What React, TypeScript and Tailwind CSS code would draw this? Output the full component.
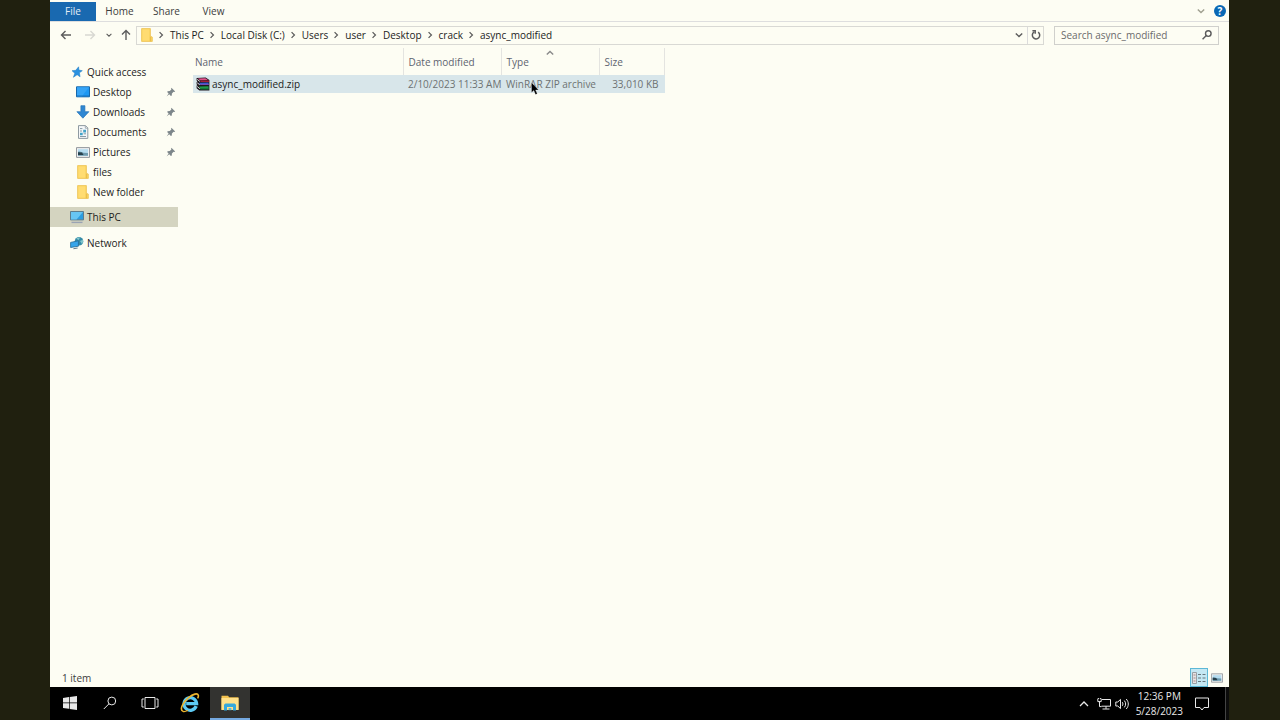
import type { ReactNode } from "react";

type IconProps = { className?: string };

function ChevronIcon({ className = "" }: IconProps) {
  return (
    <svg viewBox="0 0 10 10" fill="none" stroke="currentColor" strokeWidth="1.4" className={`h-[10px] w-[10px] shrink-0 ${className}`}>
      <path d="M1.8 3.4 5 6.6l3.2-3.2" />
    </svg>
  );
}

function FolderIcon() {
  return (
    <svg viewBox="0 0 12 14" className="h-[14px] w-3 shrink-0">
      <path d="M.6.6h8.8v7.6l1.9.9v4.3H.6z" fill="#fbd45c" stroke="#ecc253" strokeWidth=".8" />
      <path d="M1.4 1.4h7v11.2h-7z" fill="#ffdc72" />
      <path d="M9.4 8.6v4.6" stroke="#e3b548" strokeWidth=".8" />
    </svg>
  );
}

function PinIcon() {
  return (
    <svg viewBox="0 0 10 10" className="h-[10px] w-[10px] shrink-0">
      <path d="M5.4.8 9.2 4.6l-1 .4-.6-.2-1.7 1.8-.1 2L4.9 9 3.2 7.2.6 9.4l2-2.8L1.1 5l.6-.8 2-.1 1.7-1.7-.3-.7z" fill="#7d868a" />
    </svg>
  );
}

function StarIcon() {
  return (
    <svg viewBox="0 0 12 12" className="h-3 w-3 shrink-0">
      <path d="m7.6.8.3 3.3 3.4.6-2.9 2.1.7 4-3-2.1-3.7 2.6 1.4-4L1 4.7l3.8-.4z" fill="#2a91e0" stroke="#1b78c2" strokeWidth=".5" />
    </svg>
  );
}

function DesktopIcon() {
  return (
    <svg viewBox="0 0 14 12" className="h-3 w-[14px] shrink-0">
      <path d="M.5.8h13v10H.5z" fill="#1e98f3" stroke="#1767aa" />
      <path d="M1 1.3h12L6 10.3H1z" fill="#36a4f6" />
      <path d="M1 9.5h12v.8H1z" fill="#1571bd" />
    </svg>
  );
}

function DownloadIcon() {
  return (
    <svg viewBox="0 0 14 14" className="h-[14px] w-[14px] shrink-0">
      <path d="M4.9.7h4v6h4L6.9 13.2.9 6.7h4z" fill="#2f87d2" stroke="#2573b7" strokeWidth=".7" />
    </svg>
  );
}

function DocumentIcon() {
  return (
    <svg viewBox="0 0 12 14" className="h-[14px] w-3 shrink-0">
      <path d="M1.5.6h7l2.3 2.3v10.5H1.5z" fill="#f5f7f8" stroke="#8f9aa1" />
      <path d="M8.3.8v2.4h2.4" fill="none" stroke="#8f9aa1" strokeWidth=".8" />
      <path d="M3 3.6h2.4M3 6h2M3 11.5h6M6.6 8.8H9" stroke="#6a8390" strokeWidth=".8" />
      <path d="M6.2 4.8H9v2.6H6.2zM3 7.8h2.7v2.5H3z" fill="#43a4c9" />
    </svg>
  );
}

function PictureIcon({ className = "h-[11px] w-[14px]" }: IconProps) {
  return (
    <svg viewBox="0 0 14 11" className={`shrink-0 ${className}`}>
      <path d="M.5.6h13v9.8H.5z" fill="#eef0f1" stroke="#93989c" />
      <path d="M2 2.2h10v6.6H2z" fill="#b5dcef" />
      <path d="M2 4.8c2.4-.8 3.6.6 5.4.9l4.6.3v2.8H2z" fill="#6d9aae" />
      <path d="M2 5.2 6 5.6 7.6 8H2z" fill="#27404b" />
    </svg>
  );
}

function ComputerIcon() {
  return (
    <svg viewBox="0 0 14 14" className="h-[14px] w-[14px] shrink-0">
      <path d="M.5 1.5h13v8.4H.5z" fill="#2d9de0" stroke="#5e7c8d" />
      <path d="M1 2h12L6.5 9.4H1z" fill="#67c5f3" />
      <path d="M1.5 12.4h11" stroke="#9aa3b3" strokeWidth="1.4" />
    </svg>
  );
}

function NetworkIcon() {
  return (
    <svg viewBox="0 0 14 14" className="h-[14px] w-[14px] shrink-0">
      <circle cx="9" cy="5.3" r="4.3" fill="#368ca7" />
      <path d="M6.3 2.3c1.5-1 3-1 3.8-.7L8.4 4.3zM10 5l2.8-1.2c.6 1.7.1 3.2-.8 4.1z" fill="#83c7cd" />
      <path d="m.6 6.4 7.8-1.6v5.4L.6 11.5z" fill="#36a5ea" stroke="#236a98" strokeWidth=".8" />
      <path d="M3.4 12.7 7.6 12" stroke="#667d8b" strokeWidth="1.1" />
    </svg>
  );
}

function ArchiveIcon() {
  return (
    <svg viewBox="0 0 14 14" className="h-[14px] w-[14px] shrink-0">
      <path d="M.6 1 9.6.4l3.8 2.6v10.4H3.4L.6 11.2V8.6l.8-.4-.8-.9V4.9l.8-.4-.8-.9z" fill="#1d171d" />
      <path d="m2 1.6 7.4-.4 2.6 1.7-8 .3z" fill="#e0508a" />
      <path d="M4.4 3.6H13v1.2H4.4z" fill="#c4223f" />
      <path d="m3 5.8 9.6-.2V8H4.4z" fill="#3f55cf" />
      <path d="M4.4 7h8.4v.9H4.4z" fill="#7a4fb0" />
      <path d="m3 9.4 9.6-.1v2.9H4.4z" fill="#1f9a48" />
      <path d="M4.4 11.4H13v.9H4.4z" fill="#116b30" />
      <path d="m1.2 2.4 2.6 2M1.2 5.8l2.6 2M1.2 9.5l2.6 2.2" stroke="#f4f4f4" strokeWidth=".9" />
    </svg>
  );
}

function ArrowIcon({ className = "" }: IconProps) {
  return (
    <svg viewBox="0 0 12 12" fill="none" stroke="currentColor" strokeWidth="1.4" className={`h-3 w-3 shrink-0 ${className}`}>
      <path d="M11 6H1.5M5.5 2l-4 4 4 4" />
    </svg>
  );
}

function MagnifierIcon({ className = "" }: IconProps) {
  return (
    <svg viewBox="0 0 14 14" fill="none" stroke="currentColor" className={`shrink-0 ${className}`}>
      <circle cx="8.8" cy="5" r="3.9" />
      <path d="M6 7.8.8 13" />
    </svg>
  );
}

function ExplorerIcon() {
  return (
    <svg viewBox="0 0 18 16" className="h-4 w-[18px]">
      <path d="M.5.7H7l1.2 1.6h9.3v12.6H.5z" fill="#f2c14e" />
      <path d="M.5 3h17v11.9H.5z" fill="#ffe08a" />
      <path d="M3 15.5V9.8L4.4 8.4h9.2L15 9.8v5.7h-3V12H6v3.5z" fill="#35a8dc" />
      <path d="M7.6 13h2.8v2.2H7.6z" fill="#58b9dc" />
    </svg>
  );
}

function InternetExplorerIcon() {
  return (
    <svg viewBox="0 0 20 20" fill="none" className="h-5 w-5">
      <path d="M16.2 13.2A6.3 6.3 0 1 1 16.6 10.6H6.2" stroke="#5dcaf3" strokeWidth="3.3" />
      <path d="M3 18.4C-.8 16.5 3 9.2 8.6 4.6 13 1 17.6-.2 18.3 2.2c.3 1-.1 2.1-.7 3.1" stroke="#efb62e" strokeWidth="1.6" />
      <path d="M3 18.4c1.3.5 3.2-.2 4.8-1.2" stroke="#efb62e" strokeWidth="1.3" />
    </svg>
  );
}

const tabs = ["Home", "Share", "View"];
const crumbs = ["This PC", "Local Disk (C:)", "Users", "user", "Desktop", "crack", "async_modified"];

const quickAccess = [
  { name: "Desktop", icon: <DesktopIcon />, pinned: true },
  { name: "Downloads", icon: <DownloadIcon />, pinned: true },
  { name: "Documents", icon: <DocumentIcon />, pinned: true },
  { name: "Pictures", icon: <PictureIcon />, pinned: true },
  { name: "files", icon: <FolderIcon />, pinned: false },
  { name: "New folder", icon: <FolderIcon />, pinned: false },
];

function Ribbon() {
  return (
    <div className="flex h-[22px] items-center border-b border-[#dedede] pt-px">
      <button type="button" className="h-[19px] w-[46px] bg-[#1969b0] text-[#e4eef6]">
        File
      </button>
      {tabs.map((tab) => (
        <button key={tab} type="button" className="w-[47px] text-[#3c3c3c]">
          {tab}
        </button>
      ))}
      <button type="button" aria-label="Minimize the ribbon" className="ml-auto text-[#a0a090]">
        <ChevronIcon />
      </button>
      <button
        type="button"
        aria-label="Help"
        className="mr-[3px] ml-2 flex h-3 w-3 items-center justify-center rounded-full bg-[#0968b5] font-bold text-white"
      >
        ?
      </button>
    </div>
  );
}

function AddressBar() {
  return (
    <div className="flex h-[26px] items-center px-[10px] text-[#5c5c5c]">
      <button type="button" aria-label="Back">
        <ArrowIcon />
      </button>
      <button type="button" aria-label="Forward" className="ml-3 text-[#d8d8d2]">
        <ArrowIcon className="rotate-180" />
      </button>
      <button type="button" aria-label="Recent locations" className="ml-2">
        <ChevronIcon className="scale-75" />
      </button>
      <button type="button" aria-label="Up" className="ml-1.5">
        <ArrowIcon className="rotate-90" />
      </button>
      <div className="ml-1 flex h-[19px] flex-1 items-center border border-[#d9d9d4] pl-1">
        <FolderIcon />
        <ol className="flex flex-1 items-center text-[#1c1c1c]">
          {crumbs.map((crumb) => (
            <li key={crumb} className="flex items-center">
              <ChevronIcon className="mr-1 ml-[3px] -rotate-90 scale-90 text-[#5c5c5c]" />
              <a href="#">{crumb}</a>
            </li>
          ))}
        </ol>
        <button type="button" aria-label="Previous locations" className="mr-[3px]">
          <ChevronIcon />
        </button>
        <button type="button" aria-label="Refresh" className="flex h-[17px] w-4 items-center justify-center border-l border-[#dcdcdc]">
          <svg viewBox="0 0 10 10" fill="none" stroke="currentColor" strokeWidth="1.5" className="h-[10px] w-[10px]">
            <path d="M7.2 2.2A3.7 3.7 0 1 1 3 2.1M1.4.8h2.8v3" />
          </svg>
        </button>
      </div>
      <div className="ml-[10px] flex h-[19px] w-[165px] items-center border border-[#d0d0cc] px-1.5">
        <input
          type="text"
          aria-label="Search async_modified"
          placeholder="Search async_modified"
          className="min-w-0 flex-1 bg-transparent outline-none placeholder:text-[#6b6b6b]"
        />
        <MagnifierIcon className="h-[10px] w-[10px] stroke-2" />
      </div>
    </div>
  );
}

type NavItemProps = {
  icon: ReactNode;
  name: string;
  nested?: boolean;
  pinned?: boolean;
  selected?: boolean;
};

function NavItem({ icon, name, nested = false, pinned = false, selected = false }: NavItemProps) {
  return (
    <a
      href="#"
      className={`flex h-5 items-center pr-[2px] ${nested ? "pl-[26px]" : "pl-5"} ${selected ? "bg-[#d4d4c0]" : ""}`}
    >
      <span className="mr-[3px] flex w-[14px] justify-center">{icon}</span>
      <span className="flex-1">{name}</span>
      {pinned ? <PinIcon /> : null}
    </a>
  );
}

function Sidebar() {
  return (
    <nav className="w-32 shrink-0 pt-[14px]">
      <NavItem icon={<StarIcon />} name="Quick access" />
      {quickAccess.map((item) => (
        <NavItem key={item.name} icon={item.icon} name={item.name} pinned={item.pinned} nested />
      ))}
      <div className="mt-[5px] flex flex-col gap-1.5">
        <NavItem icon={<ComputerIcon />} name="This PC" selected />
        <NavItem icon={<NetworkIcon />} name="Network" />
      </div>
    </nav>
  );
}

function FileList() {
  return (
    <main className="min-w-0 flex-1 pl-[15px]">
      <table className="w-[472px] table-fixed border-collapse text-left">
        <thead className="text-[#5e6470]">
          <tr className="h-[27px]">
            <th className="w-[210px] border-r border-[#e4e4e0] p-0 pl-[2px] font-normal">Name</th>
            <th className="w-[98px] border-r border-[#e4e4e0] p-0 pl-[5px] font-normal">Date modified</th>
            <th className="relative w-[98px] border-r border-[#e4e4e0] p-0 pl-[5px] font-normal">
              Type
              <ChevronIcon className="absolute top-0 left-[43px] rotate-180 text-[#8a8a8a]" />
            </th>
            <th className="border-r border-[#e4e4e0] p-0 pl-[5px] font-normal">Size</th>
          </tr>
        </thead>
        <tbody>
          <tr className="h-[18px] bg-[#d8e6ea] text-[#6d7272]">
            <td className="p-0 text-[#1c1c1c]">
              <span className="flex items-center gap-[2px] pl-[3px]">
                <ArchiveIcon />
                async_modified.zip
              </span>
            </td>
            <td className="p-0 pl-[5px] whitespace-nowrap">2/10/2023 11:33 AM</td>
            <td className="relative p-0 pl-[5px]">
              WinRAR ZIP archive
              <svg viewBox="0 0 8 13" className="absolute top-[7px] left-[30px] h-[13px] w-2">
                <path d="M.5.5v10l2.3-2 1.7 4 1.8-.8-1.7-3.7h3z" fill="#000" stroke="#fff" strokeWidth=".3" />
              </svg>
            </td>
            <td className="p-0 pr-1.5 text-right">33,010 KB</td>
          </tr>
        </tbody>
      </table>
    </main>
  );
}

function StatusBar() {
  return (
    <div className="flex h-[19px] items-center pr-1.5 pl-3 text-[#3c3c3c]">
      <span className="flex-1">1 item</span>
      <button type="button" aria-label="Details" className="flex h-[19px] w-[18px] items-center justify-center border border-[#5cb8d6] bg-[#c5e8f3]">
        <svg viewBox="0 0 14 12" className="h-3 w-[14px]">
          <path d="M.5.5h4v11h-4z" fill="#e4e4e4" stroke="#9aa0a4" />
          <path d="M1.5 3h2M1.5 6h2M1.5 9h2" stroke="#a88" />
          <path d="M6 2.5h3M10.5 2.5h3M6 6h3M10.5 6h3M6 9.5h3M10.5 9.5h3" stroke="#66767d" />
        </svg>
      </button>
      <button type="button" aria-label="Large icons" className="ml-[3px]">
        <PictureIcon className="h-[10px] w-3" />
      </button>
    </div>
  );
}

function TaskButton({ label, active = false, children }: { label: string; active?: boolean; children: ReactNode }) {
  return (
    <button
      type="button"
      aria-label={label}
      className={`flex h-full w-10 items-center justify-center border-b-2 ${
        active ? "border-[#75a9e0] bg-[#333330]" : "border-transparent"
      }`}
    >
      {children}
    </button>
  );
}

function Taskbar() {
  return (
    <footer className="flex h-[33px] items-center bg-black text-[#e8e8e8]">
      <TaskButton label="Start">
        <svg viewBox="0 0 14 14" fill="currentColor" className="h-[14px] w-[14px]">
          <path d="M0 2 6 1.1v5.5H0zM6.7 1 14 0v6.6H6.7zM0 7.3h6v5.5L0 12zM6.7 7.3H14V14l-7.3-1z" />
        </svg>
      </TaskButton>
      <TaskButton label="Search">
        <MagnifierIcon className="h-[14px] w-[14px]" />
      </TaskButton>
      <TaskButton label="Task view">
        <svg viewBox="0 0 18 12" fill="none" stroke="currentColor" className="h-3 w-[18px]">
          <path d="M4 .5h10v11H4zM2.8 2H1v8h1.8M15.2 2H17v8h-1.8" />
        </svg>
      </TaskButton>
      <TaskButton label="Internet Explorer">
        <InternetExplorerIcon />
      </TaskButton>
      <TaskButton label="File Explorer" active>
        <ExplorerIcon />
      </TaskButton>

      <div className="ml-auto flex h-full items-center">
        <button type="button" aria-label="Show hidden icons">
          <ChevronIcon className="rotate-180 scale-125 stroke-1" />
        </button>
        <svg viewBox="0 0 14 12" fill="none" stroke="currentColor" className="ml-2 h-3 w-[14px]">
          <path d="M5 1.5h8.5v6.7h-9M9 8.2v2.6M5.5 11h7M.8.6v3h3.4v-3M2.5 3.6v5h2M1.6 0v1M3.4 0v1" />
        </svg>
        <svg viewBox="0 0 14 12" fill="none" stroke="currentColor" className="ml-1 h-3 w-[14px]">
          <path d="M.8 4h2l2.7-2.6v9.2L2.8 8h-2zM7.3 4.2c.8 1 .8 2.6 0 3.6M9.3 2.6c1.8 2 1.8 4.8 0 6.8M11.2 1c2.8 3 2.8 7 0 10" />
        </svg>
        <div className="ml-[7px] flex flex-col text-center leading-[15px]">
          <span>12:36 PM</span>
          <span>5/28/2023</span>
        </div>
        <button type="button" aria-label="Notifications" className="mr-4 ml-3">
          <svg viewBox="0 0 14 14" fill="none" stroke="currentColor" className="h-[14px] w-[14px]">
            <path d="M.5 1h13v9.5H9L7 13l-2-2.5H.5z" />
          </svg>
        </button>
        <div className="h-full w-1 border-l border-[#444444] bg-[#0c0c0c]" />
      </div>
    </footer>
  );
}

export default function App() {
  return (
    <div className="min-h-screen bg-[#20200f] pr-[51px] pl-[50px] font-['Open_Sans',sans-serif] text-[10px] leading-[14px] text-[#1c1c1c]">
      <div className="flex min-h-screen flex-col bg-[#fdfdf3]">
        <Ribbon />
        <AddressBar />
        <div className="flex flex-1">
          <Sidebar />
          <FileList />
        </div>
        <StatusBar />
        <Taskbar />
      </div>
    </div>
  );
}
